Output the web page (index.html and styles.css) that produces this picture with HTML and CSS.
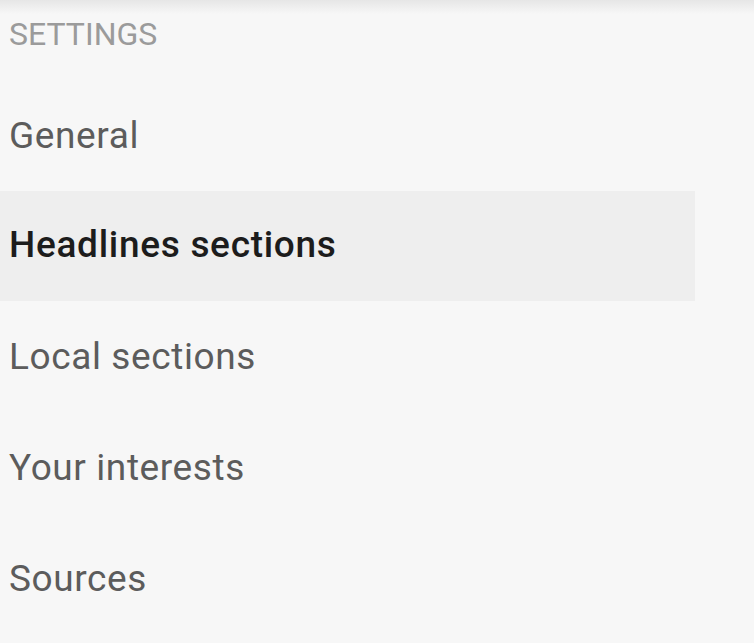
FILE: index.html
```html
<!DOCTYPE html>
<html lang="en">
<head>
  <meta charset="utf-8" />
  <title>Settings</title>
  <link rel="stylesheet" href="styles.css">
</head>
<body>
  <div class="topshade"></div>
  <div id="drawer">
    <h3 class="section-title">SETTINGS</h3>
    <ul class="menu">
      <li class="item">General</li>
      <li class="item active">Headlines sections</li>
      <li class="item">Local sections</li>
      <li class="item">Your interests</li>
      <li class="item">Sources</li>
    </ul>
  </div>
</body>
</html>
```

FILE: styles.css
```css
html, body { margin: 0; padding: 0; font-family: Roboto, "Noto Sans", Arial, sans-serif; }
body { background: #f7f7f7; height: 643px; overflow: hidden; position: relative; }
.topshade { position: absolute; left: 0; top: 0; width: 100%; height: 14px; background: linear-gradient(#e6e6e6, rgba(247,247,247,0)); }
#drawer { width: 695px; }
.section-title { margin: 0; padding: 14px 0 26px 9px; height: 40px; line-height: 40px; font-size: 32px; font-weight: normal; color: #9b9b9b; }
.menu { list-style: none; margin: 0; padding: 0; }
.item { height: 111px; line-height: 112px; padding-left: 9px; font-size: 37px; letter-spacing: 0.6px; color: #5c5c5c; }
.item.active { background: #eeeeee; color: #1c1c1c; font-weight: 500; letter-spacing: 0.7px; line-height: 108px; height: 110px; }
```
